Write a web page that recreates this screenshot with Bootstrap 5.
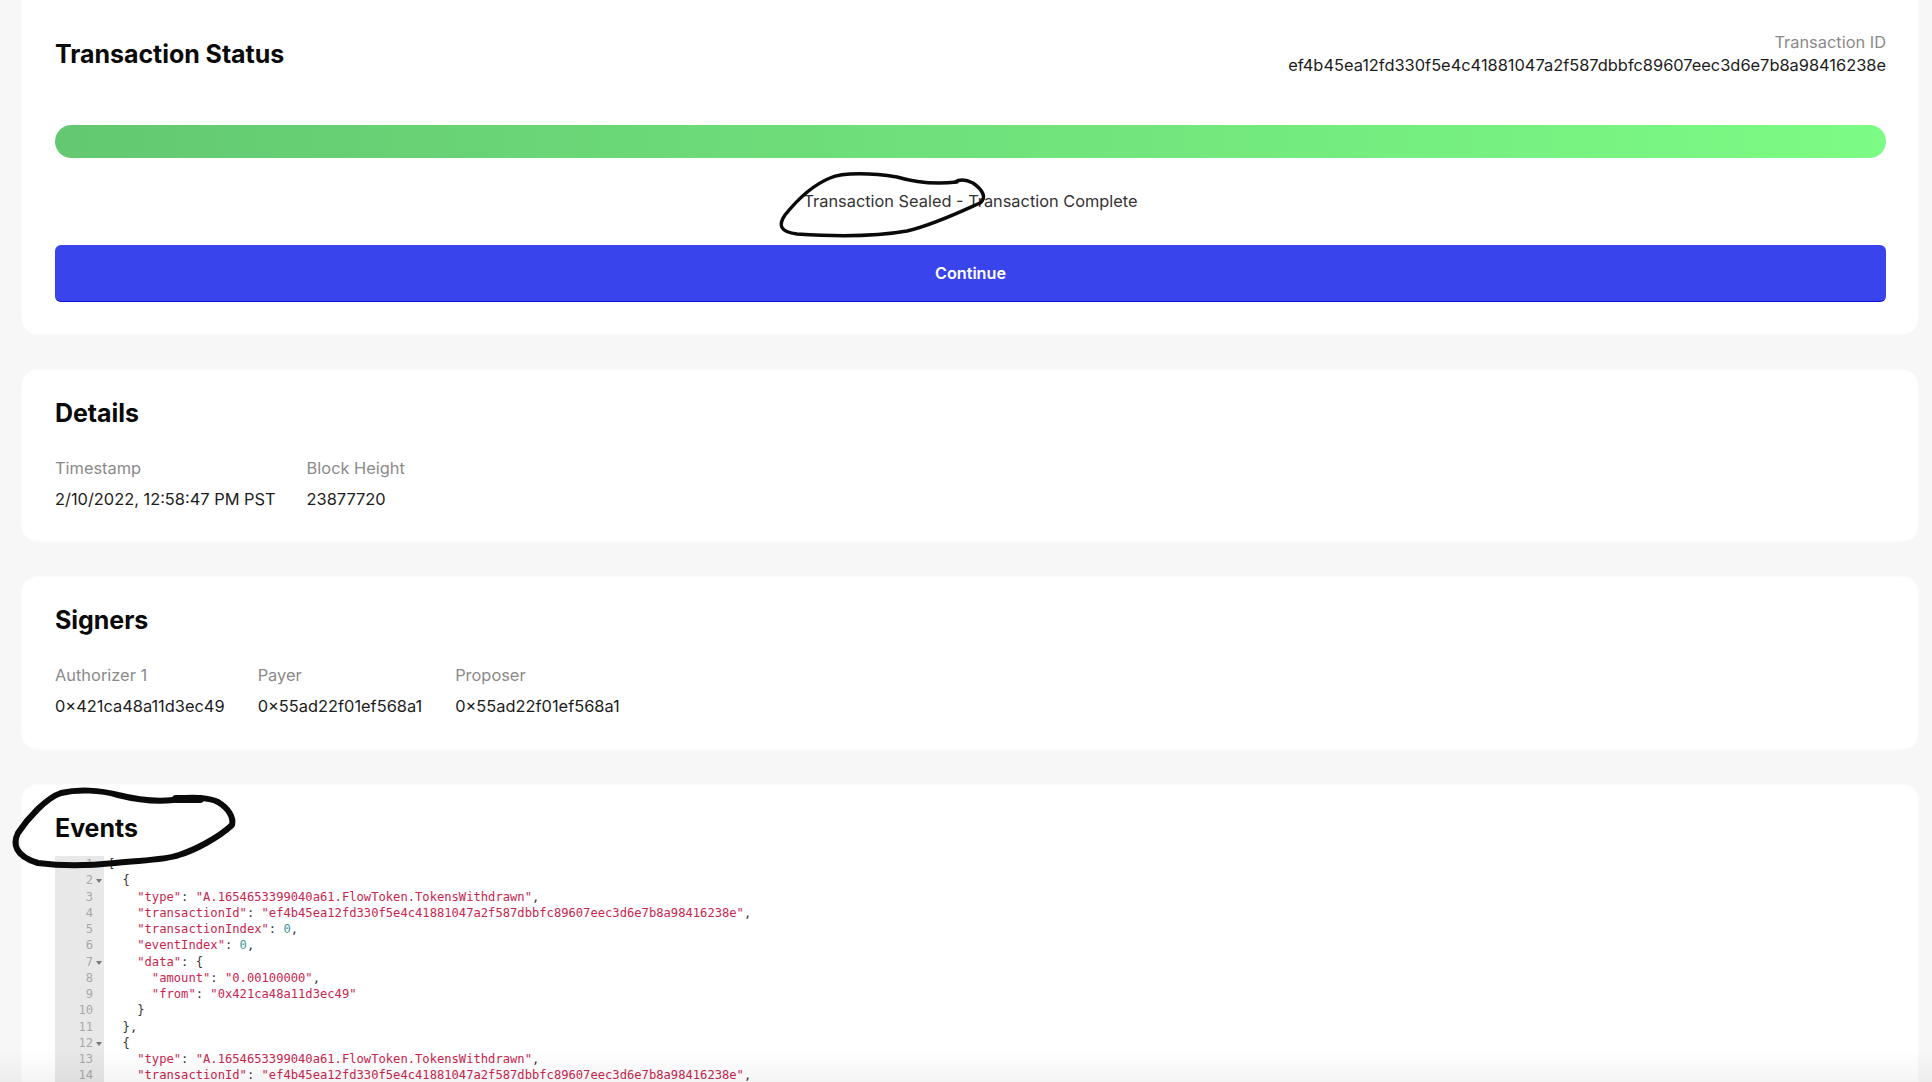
<!DOCTYPE html>
<html lang="en">
<head>
<meta charset="utf-8">
<title>Transaction Status</title>
<link href="https://cdn.jsdelivr.net/npm/bootstrap@5.3.0/dist/css/bootstrap.min.css" rel="stylesheet">
<style>
html,body{height:1082px;overflow:hidden}
body{background:#f7f7f7;font-family:Inter,"Liberation Sans",sans-serif;color:#111;position:relative}
.page-wrap{padding:0 13px 0 21px;display:flex;flex-direction:column;gap:34px;margin-top:-20px}
.panel{background:#fff;border:1px solid #fbfbfb;border-radius:16px;padding:33px 32px 33px 33px}
.panel-first{height:355px;padding-top:59px}
.panel-info{height:173px;padding-top:29px}
.panel-signers{height:174px}
.panel-events{height:340px;padding-top:29px;padding-bottom:0;overflow:hidden;border-bottom:0}
.ttl{font-size:25px;font-weight:700;line-height:29px;color:#0a0a0a;margin:0;letter-spacing:-.05px}
.lbl{font-size:16.4px;line-height:20px;color:#8a8a8a}
.val{font-size:16.4px;line-height:20px;color:#1c1c1c}
.txid{margin-top:-8px;text-align:right}
.txid .val{margin-top:3px}
.status-bar{height:33px;margin-top:50px;border-radius:17px;background:linear-gradient(90deg,#63c871,#7cfb85)}
.status-note{font-size:16.35px;line-height:20px;color:#333;margin:33px 0 34px;text-align:center}
.btn-go{height:57px;background:#3a44ec;border:0;border-bottom:1px solid #1010e0;border-radius:6px;color:#fff;font-size:16.2px;font-weight:600}
.btn-go:hover{background:#3a44ec;color:#fff}
.fields{margin-top:30px;gap:33px}
.fields-tight{gap:31px}
.fields .val{margin-top:11px}
.code-box{margin-top:13px;font-family:"DejaVu Sans Mono","Liberation Mono",monospace;font-size:12.15px;line-height:16.25px;width:100%}
.gutter{width:49px;background:#e8e8e8;color:#a8a8a8;text-align:right;padding-right:11px;flex:none}
.gutter div{position:relative}
.fold::after{content:"";position:absolute;right:-9px;top:7px;border:3px solid transparent;border-top:4px solid #777;border-bottom:0}
.code-lines{padding-left:4px;color:#333}
.code-lines div{white-space:pre}
.s{color:#c8254e}
.n{color:#3a9a9c}
.scribble{position:absolute;left:0;top:0;width:1932px;height:1082px;pointer-events:none}
.bottom-fade{position:absolute;left:0;right:0;bottom:0;height:32px;background:linear-gradient(180deg,rgba(0,0,0,0),rgba(0,0,0,.045));pointer-events:none}
</style>
</head>
<body>
<div class="page-wrap">
  <section class="panel panel-first">
    <div class="d-flex justify-content-between align-items-start">
      <h2 class="ttl">Transaction Status</h2>
      <div class="txid">
        <div class="lbl">Transaction ID</div>
        <div class="val">ef4b45ea12fd330f5e4c41881047a2f587dbbfc89607eec3d6e7b8a98416238e</div>
      </div>
    </div>
    <div class="status-bar"></div>
    <div class="status-note">Transaction Sealed - Transaction Complete</div>
    <button type="button" class="btn btn-go w-100">Continue</button>
  </section>
  <section class="panel panel-info">
    <h2 class="ttl">Details</h2>
    <div class="fields fields-tight d-flex">
      <div><div class="lbl">Timestamp</div><div class="val">2/10/2022, 12:58:47 PM PST</div></div>
      <div><div class="lbl">Block Height</div><div class="val">23877720</div></div>
    </div>
  </section>
  <section class="panel panel-info panel-signers">
    <h2 class="ttl">Signers</h2>
    <div class="fields d-flex">
      <div><div class="lbl">Authorizer 1</div><div class="val">0×421ca48a11d3ec49</div></div>
      <div><div class="lbl">Payer</div><div class="val">0×55ad22f01ef568a1</div></div>
      <div><div class="lbl">Proposer</div><div class="val">0×55ad22f01ef568a1</div></div>
    </div>
  </section>
  <section class="panel panel-events">
    <h2 class="ttl">Events</h2>
    <div class="code-box d-flex">
      <div class="gutter">
        <div class="fold">1</div><div class="fold">2</div><div>3</div><div>4</div><div>5</div><div>6</div><div class="fold">7</div><div>8</div><div>9</div><div>10</div><div>11</div><div class="fold">12</div><div>13</div><div>14</div>
      </div>
      <div class="code-lines">
        <div>[</div>
        <div>  {</div>
        <div>    <span class="s">"type"</span>: <span class="s">"A.1654653399040a61.FlowToken.TokensWithdrawn"</span>,</div>
        <div>    <span class="s">"transactionId"</span>: <span class="s">"ef4b45ea12fd330f5e4c41881047a2f587dbbfc89607eec3d6e7b8a98416238e"</span>,</div>
        <div>    <span class="s">"transactionIndex"</span>: <span class="n">0</span>,</div>
        <div>    <span class="s">"eventIndex"</span>: <span class="n">0</span>,</div>
        <div>    <span class="s">"data"</span>: {</div>
        <div>      <span class="s">"amount"</span>: <span class="s">"0.00100000"</span>,</div>
        <div>      <span class="s">"from"</span>: <span class="s">"0x421ca48a11d3ec49"</span></div>
        <div>    }</div>
        <div>  },</div>
        <div>  {</div>
        <div>    <span class="s">"type"</span>: <span class="s">"A.1654653399040a61.FlowToken.TokensWithdrawn"</span>,</div>
        <div>    <span class="s">"transactionId"</span>: <span class="s">"ef4b45ea12fd330f5e4c41881047a2f587dbbfc89607eec3d6e7b8a98416238e"</span>,</div>
      </div>
    </div>
  </section>
</div>
<svg class="scribble" viewBox="0 0 1932 1082" fill="none" stroke="#0a0a0a" stroke-linecap="round" stroke-linejoin="round" aria-hidden="true">
  <path stroke-width="3.5" d="M957 182C940 184 917 183 897 177C873 173 843 172 830 178C813 185 797 200 785 215C778 225 780 232 797 234C827 236 873 237 907 231C933 225 960 212 980 203C987 198 983 190 973 183C967 180 960 179 955 182"/>
  <path stroke-width="6" d="M173 800C155 802 138 800 118 795C100 790 78 789 61 793C46 798 28 818 18 833C13 843 14 856 38 863C60 866 87 866 115 863C145 860 165 860 179 855C195 850 218 838 232 825C234 817 228 808 218 802C208 797 190 797 176 799"/>
  <path stroke-width="8" d="M176 799H200"/>
</svg>
<div class="bottom-fade"></div>
<script src="https://cdn.jsdelivr.net/npm/bootstrap@5.3.0/dist/js/bootstrap.bundle.min.js"></script>
</body>
</html>
